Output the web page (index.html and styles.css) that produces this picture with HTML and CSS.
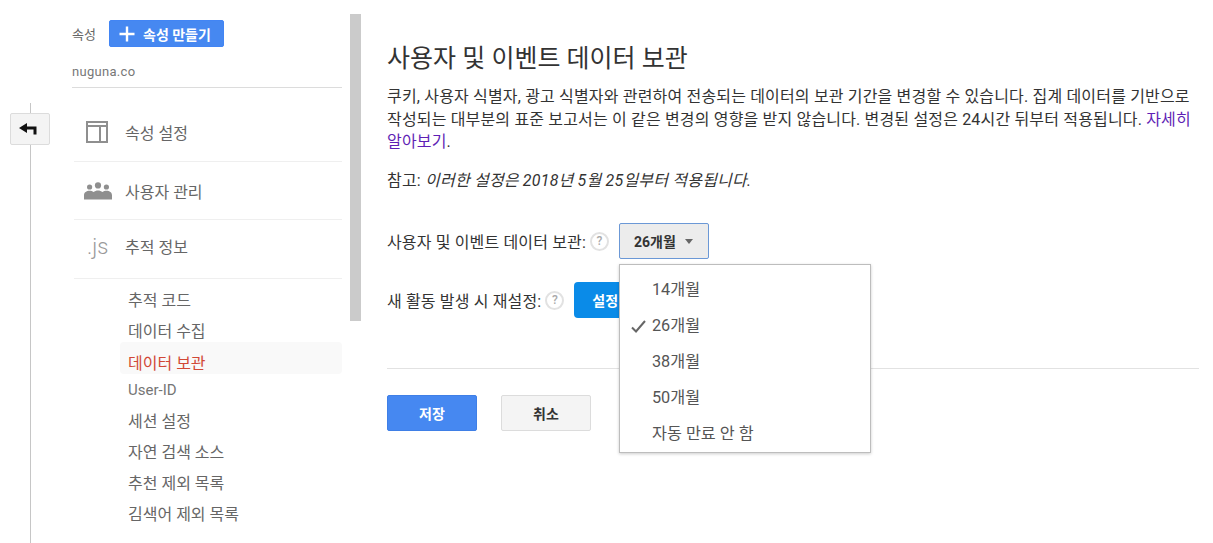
FILE: index.html
```html
<!DOCTYPE html>
<html lang="ko">
<head>
<meta charset="utf-8">
<title>사용자 및 이벤트 데이터 보관</title>
<link rel="stylesheet" href="styles.css">
</head>
<body>
<div class="page">
  <div class="rail">
    <div class="rail-line"></div>
    <button class="back" type="button" aria-label="뒤로">
      <svg width="18" height="12" viewBox="0 0 18 12"><path d="M0 5 L8 0 V3.500 H17.500 V11.500 H14.500 V6.500 H8 V10 Z" fill="#111"/></svg>
    </button>
  </div>
  <aside class="sidebar">
    <div class="prop-head">
      <span class="prop-label">속성</span>
      <button class="create" type="button">
        <svg width="16" height="16" viewBox="0 0 16 16"><path d="M6.800 0.500h2.400v6.300h6.300v2.400H9.200v6.300H6.800V9.200H0.500V6.800h6.300z" fill="#fff"/></svg>
        <span>속성 만들기</span>
      </button>
    </div>
    <div class="prop-name">nuguna.co</div>
    <nav class="main-nav">
      <a class="nav-row row-settings">
        <span class="nav-icon">
          <svg width="22" height="22" viewBox="0 0 22 22"><path d="M1 1h20v20H1z M1 5h20 M14 5v16" fill="none" stroke="#8f8f8f" stroke-width="2"/></svg>
        </span>
        <span>속성 설정</span>
      </a>
      <a class="nav-row row-users">
        <span class="nav-icon">
          <svg width="28" height="18" viewBox="0 0 28 18"><g fill="#8f8f8f"><circle cx="14" cy="3.400" r="3.100"/><circle cx="5.600" cy="5" r="2.600"/><circle cx="22.400" cy="5" r="2.600"/><path d="M0 17.500v-4.200c0-3 2.500-4.500 5.500-4.500 1.600 0 3 .4 4 1.200 1.200-.9 2.800-1.500 4.500-1.500s3.300.6 4.500 1.500c1-.8 2.400-1.200 4-1.200 3 0 5.500 1.500 5.500 4.500v4.200z"/></g></svg>
        </span>
        <span>사용자 관리</span>
      </a>
      <a class="nav-row row-track">
        <span class="nav-icon js-icon">.js</span>
        <span>추적 정보</span>
      </a>
    </nav>
    <ul class="sub-nav">
      <li>추적 코드</li>
      <li>데이터 수집</li>
      <li class="active">데이터 보관</li>
      <li class="latin">User-ID</li>
      <li>세션 설정</li>
      <li>자연 검색 소스</li>
      <li>추천 제외 목록</li>
      <li>김색어 제외 목록</li>
    </ul>
  </aside>
  <div class="scrollbar"></div>
  <main class="content">
    <h1>사용자 및 이벤트 데이터 보관</h1>
    <p class="intro">쿠키, 사용자 식별자, 광고 식별자와 관련하여 전송되는 데이터의 보관 기간을 변경할 수 있습니다. 집계 데이터를 기반으로 작성되는 대부분의 표준 보고서는 이 같은 변경의 영향을 받지 않습니다. 변경된 설정은 24시간 뒤부터 적용됩니다. <a class="more">자세히 알아보기</a>.</p>
    <p class="note">참고: <em>이러한 설정은 2018년 5월 25일부터 적용됩니다.</em></p>
    <div class="field field-retention">
      <span class="field-label">사용자 및 이벤트 데이터 보관:</span>
      <span class="help">?</span>
      <div class="select-wrap">
        <button class="select" type="button"><span>26개월</span><i class="caret"></i></button>
        <ul class="menu">
          <li>14개월</li>
          <li class="checked"><svg class="check" width="15" height="13" viewBox="0 0 15 13"><path d="M1 7.500 L5 11.500 L14 1" fill="none" stroke="#666" stroke-width="2"/></svg>26개월</li>
          <li>38개월</li>
          <li>50개월</li>
          <li>자동 만료 안 함</li>
        </ul>
      </div>
    </div>
    <div class="field field-reset">
      <span class="field-label">새 활동 발생 시 재설정:</span>
      <span class="help">?</span>
      <button class="toggle" type="button">설정</button>
    </div>
    <hr class="rule">
    <div class="actions">
      <button class="btn primary" type="button">저장</button>
      <button class="btn" type="button">취소</button>
    </div>
  </main>
</div>
</body>
</html>
```
FILE: styles.css
```css
* { box-sizing: border-box; }
html, body { margin: 0; height: 100%; overflow: hidden; background: #fff; }
body { font-family: Roboto, "Noto Sans CJK KR", sans-serif; color: #333; }
button { font-family: inherit; cursor: pointer; }
ul { list-style: none; margin: 0; padding: 0; }

.page { display: flex; height: 543px; width: 1213px; }

.rail { position: relative; width: 72px; flex: none; padding: 103px 0 0 30px; }
.rail-line { width: 1px; height: 100%; background: #c6c6c6; }
.back {
  position: absolute; left: 10px; top: 113px; width: 40px; height: 32px;
  border: 1px solid #dcdcdc; border-radius: 2px; background: #f4f4f4; padding: 0 4px 0 0;
  display: flex; align-items: center; justify-content: center;
}

.sidebar { width: 270px; flex: none; padding-top: 20px; }
.prop-head { display: flex; align-items: center; height: 27px; }
.prop-label { font-size: 13px; color: #666; width: 37px; }
.create {
  display: flex; align-items: center; width: 115px; height: 27px; padding: 0 0 0 9px;
  border: 1px solid #4285f4; border-radius: 2px; background: #4688f1; color: #fff;
  font-size: 14px; font-weight: 700;
}
.create span { margin-left: 8px; }
.prop-name {
  margin-top: 17px; height: 24px; border-bottom: 1px solid #dcdcdc;
  font-size: 13px; color: #777; letter-spacing: .3px;
}
.main-nav { padding-left: 2px; }
.nav-row {
  display: flex; align-items: center; font-size: 16px; color: #666;
  border-bottom: 1px solid #efefef;
}
.row-settings { height: 74px; padding-top: 14px; }
.row-users { height: 58px; }
.row-track { height: 59px; padding-bottom: 6px; }
.nav-icon { width: 51px; padding-left: 9px; display: flex; align-items: center; }
.row-settings .nav-icon { padding-left: 12px; }
.row-users .nav-icon { padding-left: 10px; }
.js-icon { padding-left: 13px; font-size: 22px; font-weight: 300; color: #999; }

.sub-nav { padding: 6px 0 0 48px; font-size: 16px; color: #666; }
.sub-nav li { height: 31px; line-height: 32px; padding-left: 8px; border-radius: 4px; }
.sub-nav .active { color: #d14836; background: #f9f9f9; height: 32px; line-height: 44px; margin-top: -5px; }
.sub-nav .latin { height: 32px; line-height: 33px; font-size: 15px; color: #757575; }

.scrollbar { width: 11px; height: 307px; margin: 14px 0 0 8px; background: #cbcbcb; flex: none; }

.content { position: relative; width: 812px; margin-left: 26px; flex: none; padding-top: 43px; font-size: 16px; color: #333; }
h1 { margin: 0; font-size: 25px; font-weight: 400; line-height: 32px; color: #333; }
.intro { margin: 11px 0 0; line-height: 22.5px; letter-spacing: .17px; word-break: keep-all; }
.more { color: #5f1fb5; }
.note { margin: 15.500px 0 0; line-height: 23px; letter-spacing: .2px; }
.field { display: flex; align-items: center; height: 36px; }
.field-label { letter-spacing: .15px; }
.field-retention { margin-top: 31px; }
.field-reset { margin-top: 23px; }
.help {
  width: 19px; height: 19px; border-radius: 50%; border: 2px solid #e2e2e2; color: #aaa;
  font-size: 12px; font-weight: 500; display: flex; align-items: center; justify-content: center;
  margin-left: 4px;
}
.select-wrap { position: relative; margin-left: 10px; z-index: 2; }
.select {
  display: flex; align-items: center; width: 90px; height: 36px; padding: 0 0 0 14px;
  border: 1px solid #6b98d6; border-radius: 2px; background: #ececec; color: #333;
  font-size: 14px; font-weight: 700;
}
.caret { margin-left: 9px; width: 0; height: 0; border: 4px solid transparent; border-top: 5px solid #666; border-bottom: 0; }
.menu {
  position: absolute; left: 0; top: 41px; width: 252px; height: 189px; padding-top: 7px;
  background: #fff; border: 1px solid #bdbdbd; box-shadow: 0 1px 3px rgba(0,0,0,.2); font-size: 16.25px; color: #555;
}
.menu li { position: relative; height: 36px; line-height: 36px; padding-left: 32px; }
.check { position: absolute; left: 11px; top: 12px; }
.toggle {
  margin-left: 10px; width: 60px; height: 36px; border: 0; border-radius: 4px 0 0 4px;
  background: #0a8be8; color: #fff; font-size: 14px; font-weight: 700; text-align: left; padding-left: 18px;
}
.rule { margin: 50px 0 0; border: 0; border-top: 1px solid #e2e2e2; }
.actions { display: flex; gap: 24px; margin-top: 26px; }
.btn {
  width: 90px; height: 36px; border: 1px solid #dcdcdc; border-radius: 2px; background: #f4f4f4;
  color: #333; font-size: 14px; font-weight: 700;
}
.btn.primary { background: #4688f1; border-color: #3f7fe6; color: #fff; }
```
